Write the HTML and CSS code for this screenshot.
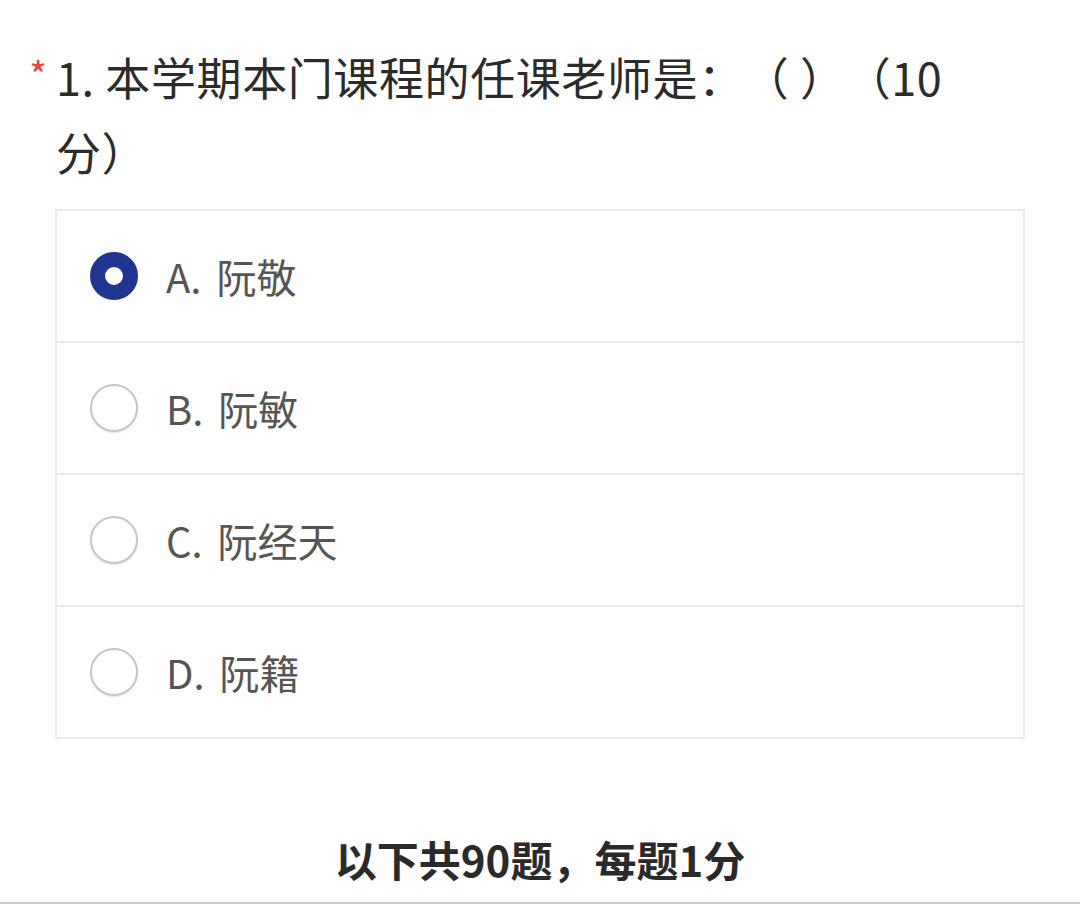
FILE: index.html
```html
<!DOCTYPE html>
<html lang="zh-CN">
<head>
<meta charset="utf-8">
<title>问卷</title>
<link rel="stylesheet" href="styles.css">
</head>
<body>
<div class="page">
  <div class="question">
    <div class="qhead">
      <span class="req">*</span>
      <div class="qtitle">1. 本学期本门课程的任课老师是：（ ）（10分）</div>
    </div>
    <div class="options">
      <div class="option">
        <span class="radio checked"></span>
        <span class="label">A. 阮敬</span>
      </div>
      <div class="option">
        <span class="radio"></span>
        <span class="label">B. 阮敏</span>
      </div>
      <div class="option">
        <span class="radio"></span>
        <span class="label">C. 阮经天</span>
      </div>
      <div class="option">
        <span class="radio"></span>
        <span class="label">D. 阮籍</span>
      </div>
    </div>
  </div>
  <div class="summary">以下共90题，每题1分</div>
</div>
</body>
</html>
```
FILE: styles.css
```css
html, body {
  margin: 0;
  padding: 0;
  background: #ffffff;
}
body {
  font-family: "Noto Sans CJK SC", "Noto Sans", sans-serif;
  color: #333333;
  text-spacing-trim: space-all;
}
.page {
  width: 1080px;
  height: 904px;
  display: flex;
  flex-direction: column;
  box-sizing: border-box;
}
.question {
  padding: 39px 55px 0 0;
}
.qhead {
  display: flex;
  align-items: flex-start;
}
.req {
  width: 56px;
  box-sizing: border-box;
  text-align: right;
  padding-right: 9px;
  color: #e8443a;
  font-size: 38px;
  line-height: 70px;
}
.qtitle {
  width: 900px;
  font-size: 45px;
  line-height: 75px;
  letter-spacing: 0.6px;
  color: #2b2b2b;
}
.options {
  margin: 20px 0 0 55px;
  border: 2px solid #ebebeb;
}
.option {
  height: 130px;
  display: flex;
  align-items: center;
  padding-left: 33px;
  gap: 28px;
}
.option + .option {
  border-top: 2px solid #ebebeb;
}
.radio {
  width: 48px;
  height: 48px;
  box-sizing: border-box;
  border-radius: 50%;
  border: 2px solid #c6c6c6;
  background: #ffffff;
  box-shadow: 0 1px 2px rgba(0, 0, 0, 0.12);
  flex: none;
}
.radio.checked {
  border: 15px solid #1f3590;
  box-shadow: none;
}
.label {
  font-size: 40px;
  color: #555555;
  line-height: 1;
  word-spacing: 6px;
}
.summary {
  margin-top: 88px;
  height: 77px;
  padding-top: 2px;
  box-sizing: border-box;
  text-align: center;
  font-size: 42px;
  font-weight: 700;
  line-height: 60px;
  color: #2a2a2a;
  border-bottom: 2px solid #cacaca;
}
```
